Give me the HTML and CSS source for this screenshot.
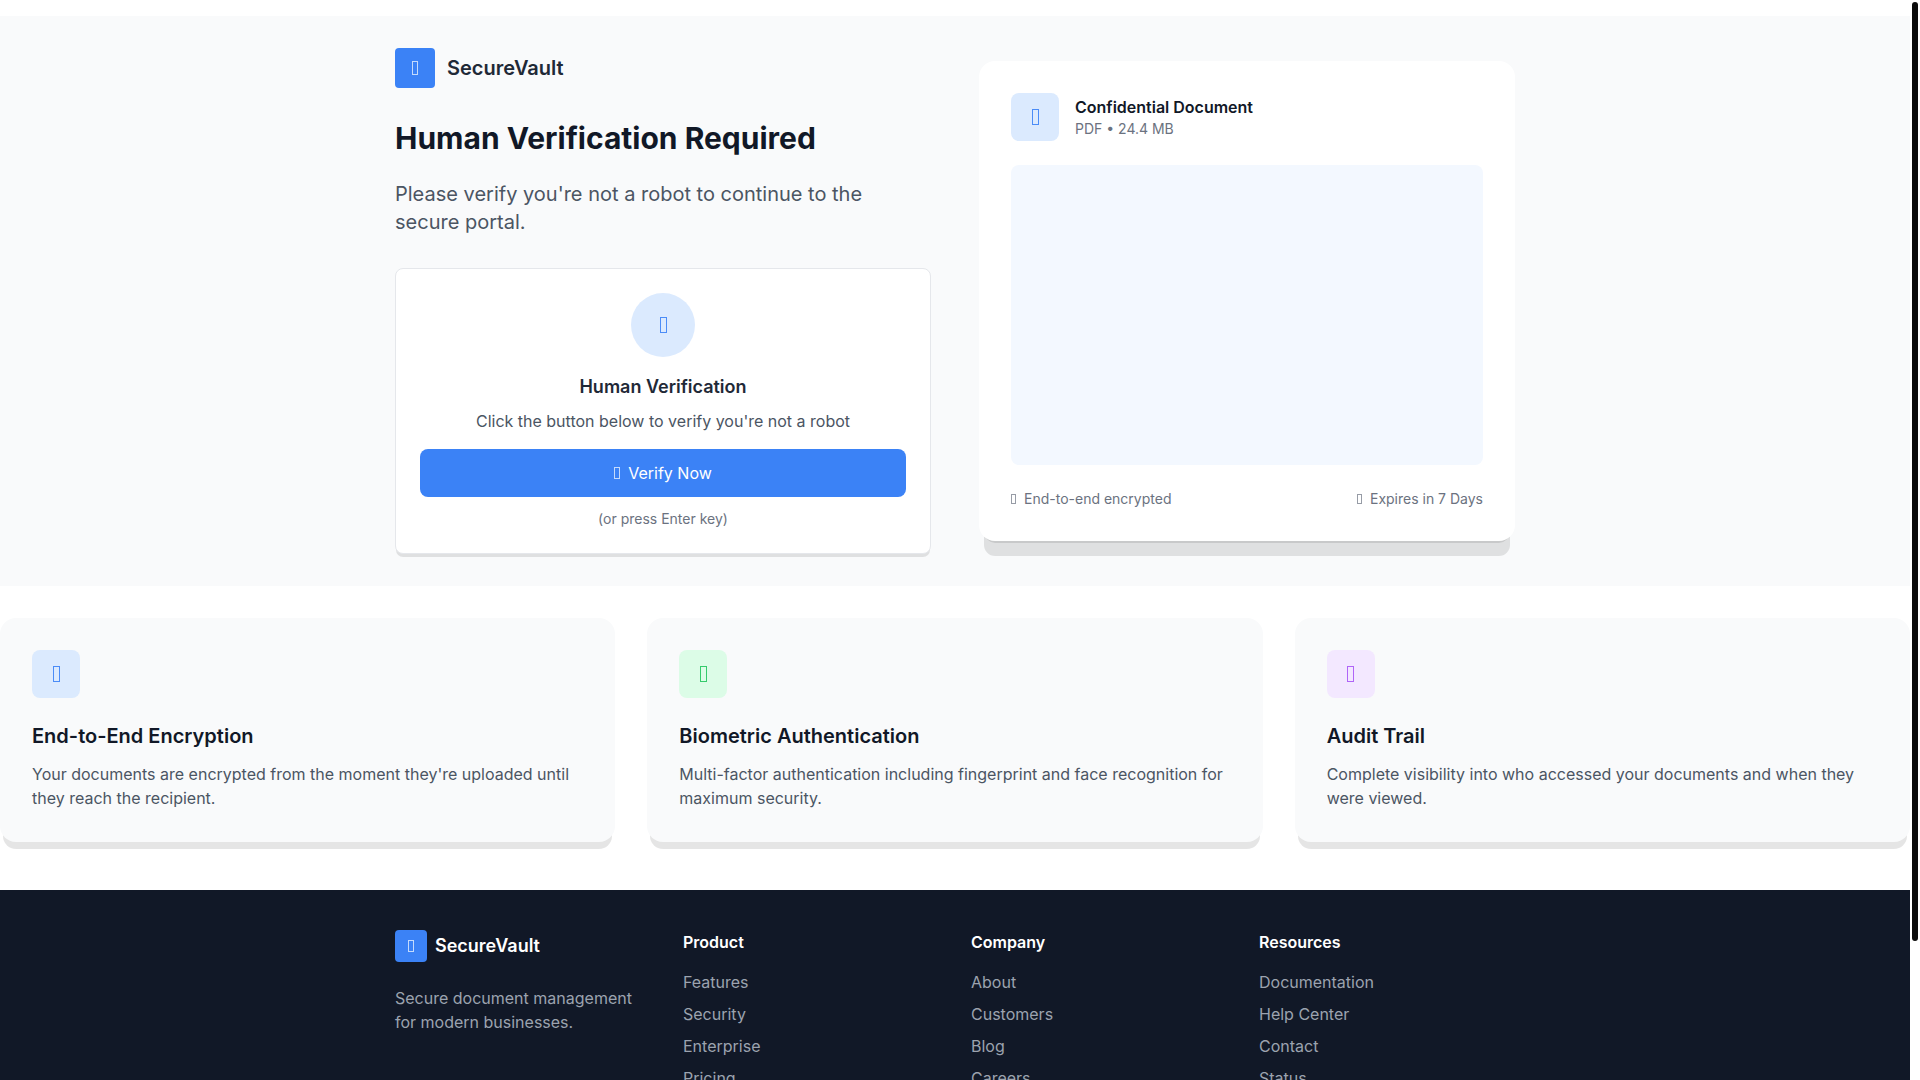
FILE: index.html
```html
<!DOCTYPE html>
<html lang="en">
<head>
    <meta charset="UTF-8">
    <meta name="viewport" content="width=device-width, initial-scale=1.0">
    <title>SecureVault - Human Verification</title>
    <link rel="stylesheet" href="styles.css">
</head>
<body>
    <main class="hero">
        <div class="container hero-grid">
            <div>
                <div class="logo">
                    <div class="logo-icon"><i class="icon icon-md"></i></div>
                    <span>SecureVault</span>
                </div>
                <h1>Human Verification Required</h1>
                <p class="lead">Please verify you're not a robot to continue to the secure portal.</p>

                <div class="verify-card">
                    <div class="verify-icon"><i class="icon icon-lg"></i></div>
                    <h2>Human Verification</h2>
                    <p>Click the button below to verify you're not a robot</p>
                    <button type="button" class="verify-btn"><i class="icon"></i>Verify Now</button>
                    <small>(or press Enter key)</small>
                </div>
            </div>

            <div class="doc-card">
                <div class="doc-header">
                    <div class="tile blue"><i class="icon icon-lg"></i></div>
                    <div>
                        <h3>Confidential Document</h3>
                        <p>PDF • 24.4 MB</p>
                    </div>
                </div>
                <div class="doc-preview"></div>
                <div class="doc-footer">
                    <span><i class="icon icon-sm"></i>End-to-end encrypted</span>
                    <span><i class="icon icon-sm"></i>Expires in 7 Days</span>
                </div>
            </div>
        </div>
    </main>

    <section class="features">
        <div class="feature">
            <div class="tile blue"><i class="icon icon-lg"></i></div>
            <h3>End-to-End Encryption</h3>
            <p>Your documents are encrypted from the moment they're uploaded until they reach the recipient.</p>
        </div>
        <div class="feature">
            <div class="tile green"><i class="icon icon-lg"></i></div>
            <h3>Biometric Authentication</h3>
            <p>Multi-factor authentication including fingerprint and face recognition for maximum security.</p>
        </div>
        <div class="feature">
            <div class="tile purple"><i class="icon icon-lg"></i></div>
            <h3>Audit Trail</h3>
            <p>Complete visibility into who accessed your documents and when they were viewed.</p>
        </div>
    </section>

    <footer>
        <div class="container footer-grid">
            <div>
                <div class="logo logo-small">
                    <div class="logo-icon"><i class="icon"></i></div>
                    <span>SecureVault</span>
                </div>
                <p>Secure document management for modern businesses.</p>
            </div>
            <div>
                <h4>Product</h4>
                <ul>
                    <li><a href="#">Features</a></li>
                    <li><a href="#">Security</a></li>
                    <li><a href="#">Enterprise</a></li>
                    <li><a href="#">Pricing</a></li>
                </ul>
            </div>
            <div>
                <h4>Company</h4>
                <ul>
                    <li><a href="#">About</a></li>
                    <li><a href="#">Customers</a></li>
                    <li><a href="#">Blog</a></li>
                    <li><a href="#">Careers</a></li>
                </ul>
            </div>
            <div>
                <h4>Resources</h4>
                <ul>
                    <li><a href="#">Documentation</a></li>
                    <li><a href="#">Help Center</a></li>
                    <li><a href="#">Contact</a></li>
                    <li><a href="#">Status</a></li>
                </ul>
            </div>
        </div>
    </footer>

    <div class="scrollbar"><div class="scrollbar-thumb"></div></div>
</body>
</html>
```
FILE: styles.css
```css
* {
    box-sizing: border-box;
    margin: 0;
    padding: 0;
}
html {
    scrollbar-width: none;
}
body {
    padding: 16px 10px 0 0;
    font-family: Inter, sans-serif;
    font-size: 16px;
    line-height: 24px;
    color: #111827;
    background: #fff;
}
h1, h2, h3, h4 {
    font-weight: 600;
}
.container {
    max-width: 1120px;
    margin: 0 auto;
}

/* outlined box icons */
.icon {
    display: inline-block;
    width: 6px;
    height: 12px;
    border: 1px solid currentColor;
    opacity: 0.7;
}
.icon-sm {
    width: 5px;
    height: 10px;
}
.icon-md {
    height: 14px;
}
.icon-lg {
    width: 7px;
    height: 16px;
    opacity: 0.9;
}

/* custom scrollbar */
.scrollbar {
    position: fixed;
    top: 0;
    right: 0;
    width: 10px;
    height: 100%;
    padding: 2px;
    background: #fff;
}
.scrollbar-thumb {
    height: 87.3%;
    border-radius: 3px;
    background: #0b0b0b;
}

/* hero */
.hero {
    padding: 32px 0;
    background: #f9fafb;
}
.hero-grid {
    display: grid;
    grid-template-columns: 1fr 1fr;
    gap: 48px;
    align-items: center;
}
.logo {
    display: flex;
    align-items: center;
    gap: 12px;
    margin-bottom: 32px;
    font-size: 20px;
    font-weight: 600;
    color: #1f2937;
}
.logo-icon {
    display: flex;
    align-items: center;
    justify-content: center;
    width: 40px;
    height: 40px;
    border-radius: 4px;
    background: #3b82f6;
    color: #fff;
}
h1 {
    margin-bottom: 24px;
    font-size: 30px;
    font-weight: 700;
    line-height: 36px;
}
.lead {
    margin-bottom: 32px;
    font-size: 20px;
    line-height: 28px;
    color: #4b5563;
}
.verify-card {
    padding: 24px;
    border: 1px solid #e5e7eb;
    border-radius: 8px;
    background: #fff;
    box-shadow: 0 4px 0 -1px rgba(0, 0, 0, 0.1);
    text-align: center;
}
.verify-icon {
    display: flex;
    align-items: center;
    justify-content: center;
    width: 64px;
    height: 64px;
    margin: 0 auto 16px;
    border-radius: 50%;
    background: #dbeafe;
    color: #3b82f6;
}
.verify-card h2 {
    margin-bottom: 8px;
    font-size: 18px;
    line-height: 28px;
    color: #1f2937;
}
.verify-card p {
    margin-bottom: 16px;
    color: #4b5563;
}
.verify-btn {
    display: flex;
    align-items: center;
    justify-content: center;
    gap: 8px;
    width: 100%;
    height: 48px;
    margin-bottom: 12px;
    border: none;
    border-radius: 8px;
    background: #3b82f6;
    color: #fff;
    font: inherit;
    cursor: pointer;
}
.verify-card small {
    display: block;
    font-size: 14px;
    line-height: 20px;
    color: #6b7280;
}

/* document card */
.doc-card {
    padding: 32px;
    border-radius: 16px;
    background: #fff;
    box-shadow: 0 20px 0 -5px rgba(0, 0, 0, 0.1), 0 8px 0 -6px rgba(0, 0, 0, 0.1);
    font-size: 14px;
    line-height: 20px;
    color: #6b7280;
}
.doc-header {
    display: flex;
    align-items: center;
    gap: 16px;
    margin-bottom: 24px;
}
.doc-header h3 {
    font-size: 16px;
    line-height: 24px;
    color: #111827;
}
.tile {
    display: flex;
    align-items: center;
    justify-content: center;
    width: 48px;
    height: 48px;
    border-radius: 8px;
}
.blue {
    background: #dbeafe;
    color: #3b82f6;
}
.green {
    background: #dcfce7;
    color: #22c55e;
}
.purple {
    background: #f3e8ff;
    color: #a855f7;
}
.doc-preview {
    height: 300px;
    margin-bottom: 24px;
    border-radius: 8px;
    background: #f3f8ff;
}
.doc-footer {
    display: flex;
    justify-content: space-between;
}
.doc-footer .icon {
    margin-right: 8px;
}

/* features */
.features {
    display: grid;
    grid-template-columns: repeat(3, 1fr);
    gap: 32px;
    padding: 32px 0 48px;
}
.feature {
    padding: 32px;
    border-radius: 16px;
    background: #f9fafb;
    box-shadow: 0 10px 0 -3px rgba(0, 0, 0, 0.1);
}
.feature .tile {
    margin-bottom: 24px;
}
.feature h3 {
    margin-bottom: 12px;
    font-size: 20px;
    line-height: 28px;
}
.feature p {
    color: #4b5563;
}

/* footer */
footer {
    padding: 40px 0 144px;
    background: #111827;
    color: #9ca3af;
}
.footer-grid {
    display: grid;
    grid-template-columns: repeat(4, 1fr);
    gap: 32px;
}
.logo-small {
    gap: 8px;
    margin-bottom: 24px;
    font-size: 18px;
    color: #fff;
}
.logo-small .logo-icon {
    width: 32px;
    height: 32px;
}
footer h4 {
    margin-bottom: 16px;
    color: #fff;
}
footer li {
    margin-bottom: 8px;
    list-style: none;
}
footer a {
    color: inherit;
    text-decoration: none;
}
```
